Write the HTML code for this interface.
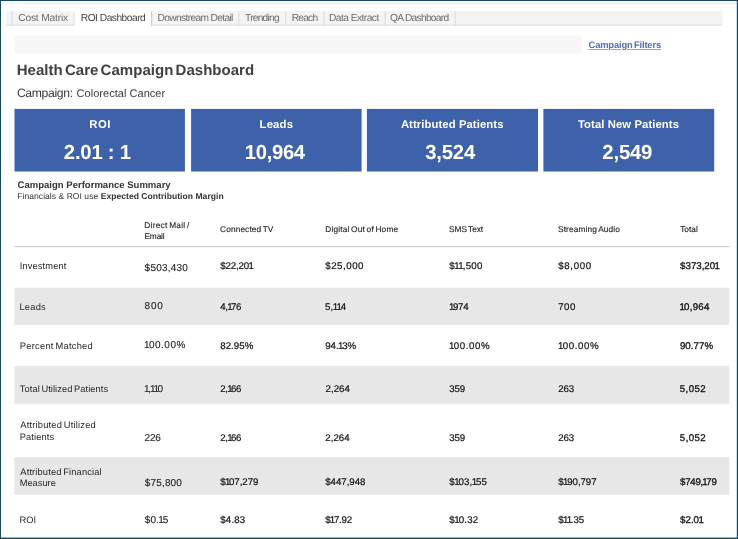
<!DOCTYPE html>
<html><head><meta charset="utf-8"><title>Health Care Campaign Dashboard</title>
<style>
*{box-sizing:border-box;margin:0;padding:0}
html,body{width:738px;height:539px;overflow:hidden;background:#fff}
body{font-family:"Liberation Sans",sans-serif;color:#222;position:relative;text-rendering:geometricPrecision}
.t{position:absolute;white-space:nowrap}
.o{margin:0 -0.12em 0 -0.06em}
.bg{position:absolute;left:0;top:0;display:block}
.txt{position:absolute;left:0;top:0;width:738px;height:539px;will-change:transform}
</style></head><body>
<svg class="bg" width="738" height="539" viewBox="0 0 738 539">
<rect x="2.2" y="2.2" width="734.6" height="3.0" fill="#f6f7fd"/>
<rect x="6" y="11" width="716.5" height="14.6" fill="#f4f4f4"/>
<rect x="6" y="24.6" width="716.5" height="1.0" fill="#e0e0e0"/>
<rect x="11.4" y="11" width="1.0" height="14.6" fill="#dadada"/>
<rect x="73.8" y="11" width="1.0" height="14.6" fill="#dadada"/>
<rect x="238.3" y="11" width="1.0" height="14.6" fill="#dadada"/>
<rect x="285.2" y="11" width="1.0" height="14.6" fill="#dadada"/>
<rect x="323.5" y="11" width="1.0" height="14.6" fill="#dadada"/>
<rect x="384.7" y="11" width="1.0" height="14.6" fill="#dadada"/>
<rect x="454.7" y="11" width="1.0" height="14.6" fill="#dadada"/>
<rect x="74.6" y="11" width="76.7" height="15" fill="#fff"/>
<rect x="151.2" y="11" width="1.0" height="15" fill="#c4c4c4"/>
<rect x="14.5" y="35.3" width="567.7" height="18.4" fill="#f7f7f7"/>
<rect x="14.5" y="108.9" width="170.4" height="62.6" fill="#3d62aa"/>
<rect x="191.1" y="108.9" width="170.5" height="62.6" fill="#3d62aa"/>
<rect x="366.9" y="108.9" width="171.1" height="62.6" fill="#3d62aa"/>
<rect x="543.4" y="108.9" width="170.8" height="62.6" fill="#3d62aa"/>
<rect x="14.3" y="246.1" width="715.0" height="1.0" fill="#c4c4c4"/>
<rect x="14.3" y="287.7" width="715.0" height="37.1" fill="#e7e7e7"/>
<rect x="14.3" y="366.1" width="715.0" height="37.8" fill="#e7e7e7"/>
<rect x="14.3" y="457.2" width="715.0" height="37.5" fill="#e7e7e7"/>
<rect x="0" y="0" width="738" height="1" fill="#15495c"/>
<rect x="0" y="0" width="1" height="539" fill="#15495c"/>
<rect x="736.8" y="0" width="1.2" height="539" fill="#15495c"/>
<rect x="0" y="537.6" width="738" height="1.4" fill="#15495c"/>
</svg>
<div class="txt">
<div class="t" style="left:18.27px;top:12.00px;font-size:10.2px;line-height:13px;letter-spacing:-0.170px;color:#6b6b6b;">Cost Matrix</div>
<div class="t" style="left:80.84px;top:12.00px;font-size:10.2px;line-height:13px;letter-spacing:-0.493px;color:#444;">ROI Dashboard</div>
<div class="t" style="left:157.58px;top:12.00px;font-size:10.2px;line-height:13px;letter-spacing:-0.644px;color:#6b6b6b;">Downstream Detail</div>
<div class="t" style="left:245.07px;top:12.00px;font-size:10.2px;line-height:13px;letter-spacing:-0.758px;color:#6b6b6b;">Trending</div>
<div class="t" style="left:291.82px;top:12.00px;font-size:10.2px;line-height:13px;letter-spacing:-0.796px;color:#6b6b6b;">Reach</div>
<div class="t" style="left:329.01px;top:12.00px;font-size:10.2px;line-height:13px;letter-spacing:-0.530px;color:#6b6b6b;">Data Extract</div>
<div class="t" style="left:389.99px;top:12.00px;font-size:10.2px;line-height:13px;letter-spacing:-0.696px;color:#6b6b6b;">QA Dashboard</div>
<div class="t" style="left:588.55px;top:39.00px;font-size:9.4px;line-height:12px;letter-spacing:-0.166px;color:#5470ad;font-weight:bold;word-spacing:-1px;text-decoration:underline;text-underline-offset:1.2px;text-decoration-thickness:0.7px;text-decoration-color:rgba(74,104,168,.6);">Campaign Filters</div>
<div class="t" style="left:16.72px;top:61.00px;font-size:15px;line-height:20px;letter-spacing:0.029px;color:#404040;font-weight:bold;word-spacing:-2px;">Health Care Campaign Dashboard</div>
<div class="t" style="left:16.90px;top:85.00px;font-size:12.2px;line-height:16px;letter-spacing:-0.350px;color:#383838;">Campaign:</div>
<div class="t" style="left:76.62px;top:87.00px;font-size:11px;line-height:14px;letter-spacing:0.031px;color:#3a3a3a;">Colorectal Cancer</div>
<div class="t" style="left:89.36px;top:118.00px;font-size:11.3px;line-height:15px;letter-spacing:0.445px;color:#fff;font-weight:bold;">ROI</div>
<div class="t" style="left:63.83px;top:140.00px;font-size:20.3px;line-height:26px;letter-spacing:-0.215px;color:#fff;font-weight:bold;">2.01 : 1</div>
<div class="t" style="left:259.56px;top:118.00px;font-size:11.3px;line-height:15px;letter-spacing:0.188px;color:#fff;font-weight:bold;">Leads</div>
<div class="t" style="left:244.83px;top:140.00px;font-size:20.3px;line-height:26px;letter-spacing:-0.354px;color:#fff;font-weight:bold;">10,964</div>
<div class="t" style="left:400.89px;top:118.00px;font-size:11.3px;line-height:15px;letter-spacing:0.083px;color:#fff;font-weight:bold;">Attributed Patients</div>
<div class="t" style="left:425.27px;top:140.00px;font-size:20.3px;line-height:26px;letter-spacing:-0.195px;color:#fff;font-weight:bold;">3,524</div>
<div class="t" style="left:577.93px;top:118.00px;font-size:11.3px;line-height:15px;letter-spacing:0.085px;color:#fff;font-weight:bold;">Total New Patients</div>
<div class="t" style="left:602.37px;top:140.00px;font-size:20.3px;line-height:26px;letter-spacing:-0.195px;color:#fff;font-weight:bold;">2,549</div>
<div class="t" style="left:17.60px;top:180.00px;font-size:9.5px;line-height:12px;letter-spacing:0.017px;color:#333;font-weight:bold;">Campaign Performance Summary</div>
<div class="t" style="left:17.31px;top:191.00px;font-size:8.55px;line-height:11px;letter-spacing:0.034px;color:#333;">Financials &amp; ROI use <b>Expected Contribution Margin</b></div>
<div class="t" style="left:144.30px;top:220.00px;font-size:8.3px;line-height:11px;letter-spacing:0.252px;color:#222;word-spacing:-0.9px;-webkit-text-stroke:0.12px #222;">Direct Mail /</div>
<div class="t" style="left:144.48px;top:231.00px;font-size:8.3px;line-height:11px;letter-spacing:-0.137px;color:#222;-webkit-text-stroke:0.12px #222;">Email</div>
<div class="t" style="left:220.09px;top:224.00px;font-size:8.3px;line-height:11px;letter-spacing:0.119px;color:#222;word-spacing:-0.9px;-webkit-text-stroke:0.12px #222;">Connected TV</div>
<div class="t" style="left:325.25px;top:224.00px;font-size:8.3px;line-height:11px;letter-spacing:0.175px;color:#222;word-spacing:-0.9px;-webkit-text-stroke:0.12px #222;">Digital Out of Home</div>
<div class="t" style="left:449.05px;top:224.00px;font-size:8.3px;line-height:11px;letter-spacing:-0.051px;color:#222;word-spacing:-0.9px;-webkit-text-stroke:0.12px #222;">SMS Text</div>
<div class="t" style="left:558.00px;top:224.00px;font-size:8.3px;line-height:11px;letter-spacing:0.142px;color:#222;word-spacing:-0.9px;-webkit-text-stroke:0.12px #222;">Streaming Audio</div>
<div class="t" style="left:680.13px;top:224.00px;font-size:8.3px;line-height:11px;letter-spacing:0.018px;color:#222;-webkit-text-stroke:0.12px #222;">Total</div>
<div class="t" style="left:19.86px;top:260.00px;font-size:9.3px;line-height:12px;letter-spacing:0.106px;color:#262626;word-spacing:-1px;">Investment</div>
<div class="t" style="left:144.62px;top:262.00px;font-size:10px;line-height:13px;letter-spacing:0.212px;color:#1c1c1c;-webkit-text-stroke:0.12px #1c1c1c;">$503,430</div>
<div class="t" style="left:220.17px;top:260.00px;font-size:9.7px;line-height:13px;letter-spacing:-0.112px;color:#111;-webkit-text-stroke:0.2px #111;">$22,20<span class="o">1</span></div>
<div class="t" style="left:325.22px;top:260.00px;font-size:9.7px;line-height:13px;letter-spacing:0.540px;color:#111;-webkit-text-stroke:0.2px #111;">$25,000</div>
<div class="t" style="left:449.20px;top:260.00px;font-size:9.7px;line-height:13px;letter-spacing:0.264px;color:#111;-webkit-text-stroke:0.2px #111;">$<span class="o">1</span><span class="o">1</span>,500</div>
<div class="t" style="left:558.19px;top:260.00px;font-size:9.7px;line-height:13px;letter-spacing:0.666px;color:#111;-webkit-text-stroke:0.2px #111;">$8,000</div>
<div class="t" style="left:680.10px;top:260.00px;font-size:9.7px;line-height:13px;letter-spacing:0.005px;color:#111;-webkit-text-stroke:0.3px #111;">$373,20<span class="o">1</span></div>
<div class="t" style="left:19.46px;top:301.00px;font-size:9.3px;line-height:12px;letter-spacing:0.229px;color:#262626;word-spacing:-1px;">Leads</div>
<div class="t" style="left:144.62px;top:300.00px;font-size:10px;line-height:13px;letter-spacing:0.808px;color:#1c1c1c;-webkit-text-stroke:0.12px #1c1c1c;">800</div>
<div class="t" style="left:220.35px;top:301.00px;font-size:9.7px;line-height:13px;letter-spacing:-0.357px;color:#111;-webkit-text-stroke:0.2px #111;">4,<span class="o">1</span>76</div>
<div class="t" style="left:325.10px;top:301.00px;font-size:9.7px;line-height:13px;letter-spacing:0.062px;color:#111;-webkit-text-stroke:0.2px #111;">5,<span class="o">1</span><span class="o">1</span>4</div>
<div class="t" style="left:449.51px;top:301.00px;font-size:9.7px;line-height:13px;letter-spacing:-0.221px;color:#111;-webkit-text-stroke:0.2px #111;"><span class="o">1</span>974</div>
<div class="t" style="left:558.13px;top:301.00px;font-size:9.7px;line-height:13px;letter-spacing:0.577px;color:#111;-webkit-text-stroke:0.2px #111;">700</div>
<div class="t" style="left:680.12px;top:301.00px;font-size:9.7px;line-height:13px;letter-spacing:0.258px;color:#111;-webkit-text-stroke:0.3px #111;"><span class="o">1</span>0,964</div>
<div class="t" style="left:19.87px;top:340.00px;font-size:9.3px;line-height:12px;letter-spacing:0.251px;color:#262626;word-spacing:-1px;">Percent Matched</div>
<div class="t" style="left:144.67px;top:339.00px;font-size:10px;line-height:13px;letter-spacing:0.495px;color:#1c1c1c;-webkit-text-stroke:0.12px #1c1c1c;"><span class="o">1</span>00.00%</div>
<div class="t" style="left:220.29px;top:340.00px;font-size:9.7px;line-height:13px;letter-spacing:0.034px;color:#111;-webkit-text-stroke:0.2px #111;">82.95%</div>
<div class="t" style="left:325.29px;top:340.00px;font-size:9.7px;line-height:13px;letter-spacing:-0.057px;color:#111;-webkit-text-stroke:0.2px #111;">94.<span class="o">1</span>3%</div>
<div class="t" style="left:449.60px;top:340.00px;font-size:9.7px;line-height:13px;letter-spacing:0.581px;color:#111;-webkit-text-stroke:0.2px #111;"><span class="o">1</span>00.00%</div>
<div class="t" style="left:558.56px;top:340.00px;font-size:9.7px;line-height:13px;letter-spacing:0.608px;color:#111;-webkit-text-stroke:0.2px #111;"><span class="o">1</span>00.00%</div>
<div class="t" style="left:679.93px;top:340.00px;font-size:9.7px;line-height:13px;letter-spacing:0.045px;color:#111;-webkit-text-stroke:0.3px #111;">90.77%</div>
<div class="t" style="left:19.80px;top:383.00px;font-size:9.3px;line-height:12px;letter-spacing:0.066px;color:#262626;word-spacing:-1px;">Total Utilized Patients</div>
<div class="t" style="left:144.70px;top:383.00px;font-size:10px;line-height:13px;letter-spacing:-0.327px;color:#1c1c1c;-webkit-text-stroke:0.12px #1c1c1c;"><span class="o">1</span>,<span class="o">1</span><span class="o">1</span>0</div>
<div class="t" style="left:220.31px;top:383.00px;font-size:9.7px;line-height:13px;letter-spacing:-0.328px;color:#111;-webkit-text-stroke:0.2px #111;">2,<span class="o">1</span>66</div>
<div class="t" style="left:325.54px;top:383.00px;font-size:9.7px;line-height:13px;letter-spacing:0.011px;color:#111;-webkit-text-stroke:0.2px #111;">2,264</div>
<div class="t" style="left:449.36px;top:383.00px;font-size:9.7px;line-height:13px;letter-spacing:-0.155px;color:#111;-webkit-text-stroke:0.2px #111;">359</div>
<div class="t" style="left:558.17px;top:383.00px;font-size:9.7px;line-height:13px;letter-spacing:-0.063px;color:#111;-webkit-text-stroke:0.2px #111;">263</div>
<div class="t" style="left:679.85px;top:383.00px;font-size:9.7px;line-height:13px;letter-spacing:0.387px;color:#111;-webkit-text-stroke:0.3px #111;">5,052</div>
<div class="t" style="left:20.33px;top:419.00px;font-size:9.3px;line-height:12px;letter-spacing:0.195px;color:#262626;word-spacing:-1px;">Attributed Utilized</div>
<div class="t" style="left:19.65px;top:431.00px;font-size:9.3px;line-height:12px;letter-spacing:0.118px;color:#262626;word-spacing:-1px;">Patients</div>
<div class="t" style="left:144.58px;top:432.00px;font-size:10px;line-height:13px;letter-spacing:-0.253px;color:#1c1c1c;-webkit-text-stroke:0.12px #1c1c1c;">226</div>
<div class="t" style="left:220.30px;top:432.00px;font-size:9.7px;line-height:13px;letter-spacing:-0.327px;color:#111;-webkit-text-stroke:0.2px #111;">2,<span class="o">1</span>66</div>
<div class="t" style="left:325.35px;top:432.00px;font-size:9.7px;line-height:13px;letter-spacing:-0.000px;color:#111;-webkit-text-stroke:0.2px #111;">2,264</div>
<div class="t" style="left:449.36px;top:432.00px;font-size:9.7px;line-height:13px;letter-spacing:-0.156px;color:#111;-webkit-text-stroke:0.2px #111;">359</div>
<div class="t" style="left:558.17px;top:432.00px;font-size:9.7px;line-height:13px;letter-spacing:-0.063px;color:#111;-webkit-text-stroke:0.2px #111;">263</div>
<div class="t" style="left:679.86px;top:432.00px;font-size:9.7px;line-height:13px;letter-spacing:0.385px;color:#111;-webkit-text-stroke:0.3px #111;">5,052</div>
<div class="t" style="left:20.33px;top:466.00px;font-size:9.3px;line-height:12px;letter-spacing:0.140px;color:#262626;word-spacing:-1px;">Attributed Financial</div>
<div class="t" style="left:19.69px;top:477.00px;font-size:9.3px;line-height:12px;letter-spacing:0.005px;color:#262626;word-spacing:-1px;">Measure</div>
<div class="t" style="left:144.83px;top:477.00px;font-size:10px;line-height:13px;letter-spacing:0.152px;color:#1c1c1c;-webkit-text-stroke:0.12px #1c1c1c;">$75,800</div>
<div class="t" style="left:220.14px;top:476.00px;font-size:9.7px;line-height:13px;letter-spacing:-0.067px;color:#111;-webkit-text-stroke:0.2px #111;">$<span class="o">1</span>07,279</div>
<div class="t" style="left:325.22px;top:476.00px;font-size:9.7px;line-height:13px;letter-spacing:-0.025px;color:#111;-webkit-text-stroke:0.2px #111;">$447,948</div>
<div class="t" style="left:449.33px;top:476.00px;font-size:9.7px;line-height:13px;letter-spacing:0.079px;color:#111;-webkit-text-stroke:0.2px #111;">$<span class="o">1</span>03,<span class="o">1</span>55</div>
<div class="t" style="left:558.34px;top:476.00px;font-size:9.7px;line-height:13px;letter-spacing:-0.061px;color:#111;-webkit-text-stroke:0.2px #111;">$<span class="o">1</span>90,797</div>
<div class="t" style="left:680.10px;top:476.00px;font-size:9.7px;line-height:13px;letter-spacing:-0.284px;color:#111;-webkit-text-stroke:0.3px #111;">$749,<span class="o">1</span>79</div>
<div class="t" style="left:19.39px;top:514.00px;font-size:9.3px;line-height:12px;letter-spacing:0.147px;color:#262626;word-spacing:-1px;">ROI</div>
<div class="t" style="left:144.82px;top:514.00px;font-size:10px;line-height:13px;letter-spacing:0.040px;color:#1c1c1c;-webkit-text-stroke:0.12px #1c1c1c;">$0.<span class="o">1</span>5</div>
<div class="t" style="left:220.34px;top:514.00px;font-size:9.7px;line-height:13px;letter-spacing:0.136px;color:#111;-webkit-text-stroke:0.2px #111;">$4.83</div>
<div class="t" style="left:325.25px;top:514.00px;font-size:9.7px;line-height:13px;letter-spacing:-0.202px;color:#111;-webkit-text-stroke:0.2px #111;">$<span class="o">1</span>7.92</div>
<div class="t" style="left:449.33px;top:514.00px;font-size:9.7px;line-height:13px;letter-spacing:0.184px;color:#111;-webkit-text-stroke:0.2px #111;">$<span class="o">1</span>0.32</div>
<div class="t" style="left:558.33px;top:514.00px;font-size:9.7px;line-height:13px;letter-spacing:-0.081px;color:#111;-webkit-text-stroke:0.2px #111;">$<span class="o">1</span><span class="o">1</span>.35</div>
<div class="t" style="left:680.12px;top:514.00px;font-size:9.7px;line-height:13px;letter-spacing:0.007px;color:#111;-webkit-text-stroke:0.3px #111;">$2.0<span class="o">1</span></div>
</div>
</body></html>
